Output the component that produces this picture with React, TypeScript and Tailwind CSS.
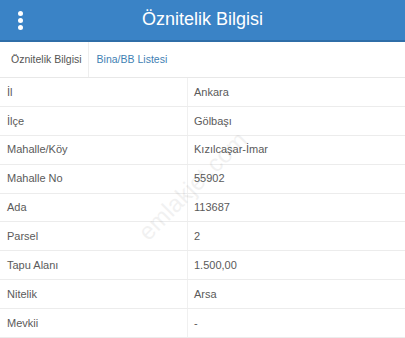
const rows: [string, string][] = [
  ["İl", "Ankara"],
  ["İlçe", "Gölbaşı"],
  ["Mahalle/Köy", "Kızılcaşar-İmar"],
  ["Mahalle No", "55902"],
  ["Ada", "113687"],
  ["Parsel", "2"],
  ["Tapu Alanı", "1.500,00"],
  ["Nitelik", "Arsa"],
  ["Mevkii", "-"],
];

export default function App() {
  return (
    <div className="w-[405px] h-[338px] overflow-hidden bg-white relative font-['Liberation_Sans',Arial,sans-serif]">
      {/* Header */}
      <div className="h-[42px] bg-[#3a83c6] border-b-2 border-[#2f6ea8] flex items-center relative">
        <div className="w-[40px] flex flex-col items-center gap-[2px]">
          <span className="w-[5px] h-[5px] rounded-full bg-white" />
          <span className="w-[5px] h-[5px] rounded-full bg-white" />
          <span className="w-[5px] h-[5px] rounded-full bg-white" />
        </div>
        <div className="flex-1 text-center text-white text-[18px] pr-[40px] -mt-[1px]">Öznitelik Bilgisi</div>
      </div>

      {/* Tabs */}
      <div className="flex h-[36px] border-b border-[#e8e8e8]">
        <div className="pl-[11px] pr-[6px] flex items-center text-[10.5px] text-[#555] border-r border-[#eee] bg-white">Öznitelik Bilgisi</div>
        <div className="pl-[8px] flex items-center text-[10.5px] text-[#3f7fb3]">Bina/BB Listesi</div>
      </div>

      {/* Table */}
      <div>
        {rows.map(([k, v]) => (
          <div key={k} className="flex h-[28.9px] border-b border-[#ececec] text-[11px] text-[#5a5a5a]">
            <div className="w-[188px] pl-[7px] flex items-center border-r border-[#f0f0f0]">{k}</div>
            <div className="flex-1 pl-[6px] flex items-center">{v}</div>
          </div>
        ))}
      </div>

      {/* Watermark */}
      <div className="absolute left-[122px] top-[168px] -rotate-[45deg] text-[24px] text-[#000] opacity-[0.05] pointer-events-none select-none">
        emlakjet.com
      </div>
    </div>
  );
}
